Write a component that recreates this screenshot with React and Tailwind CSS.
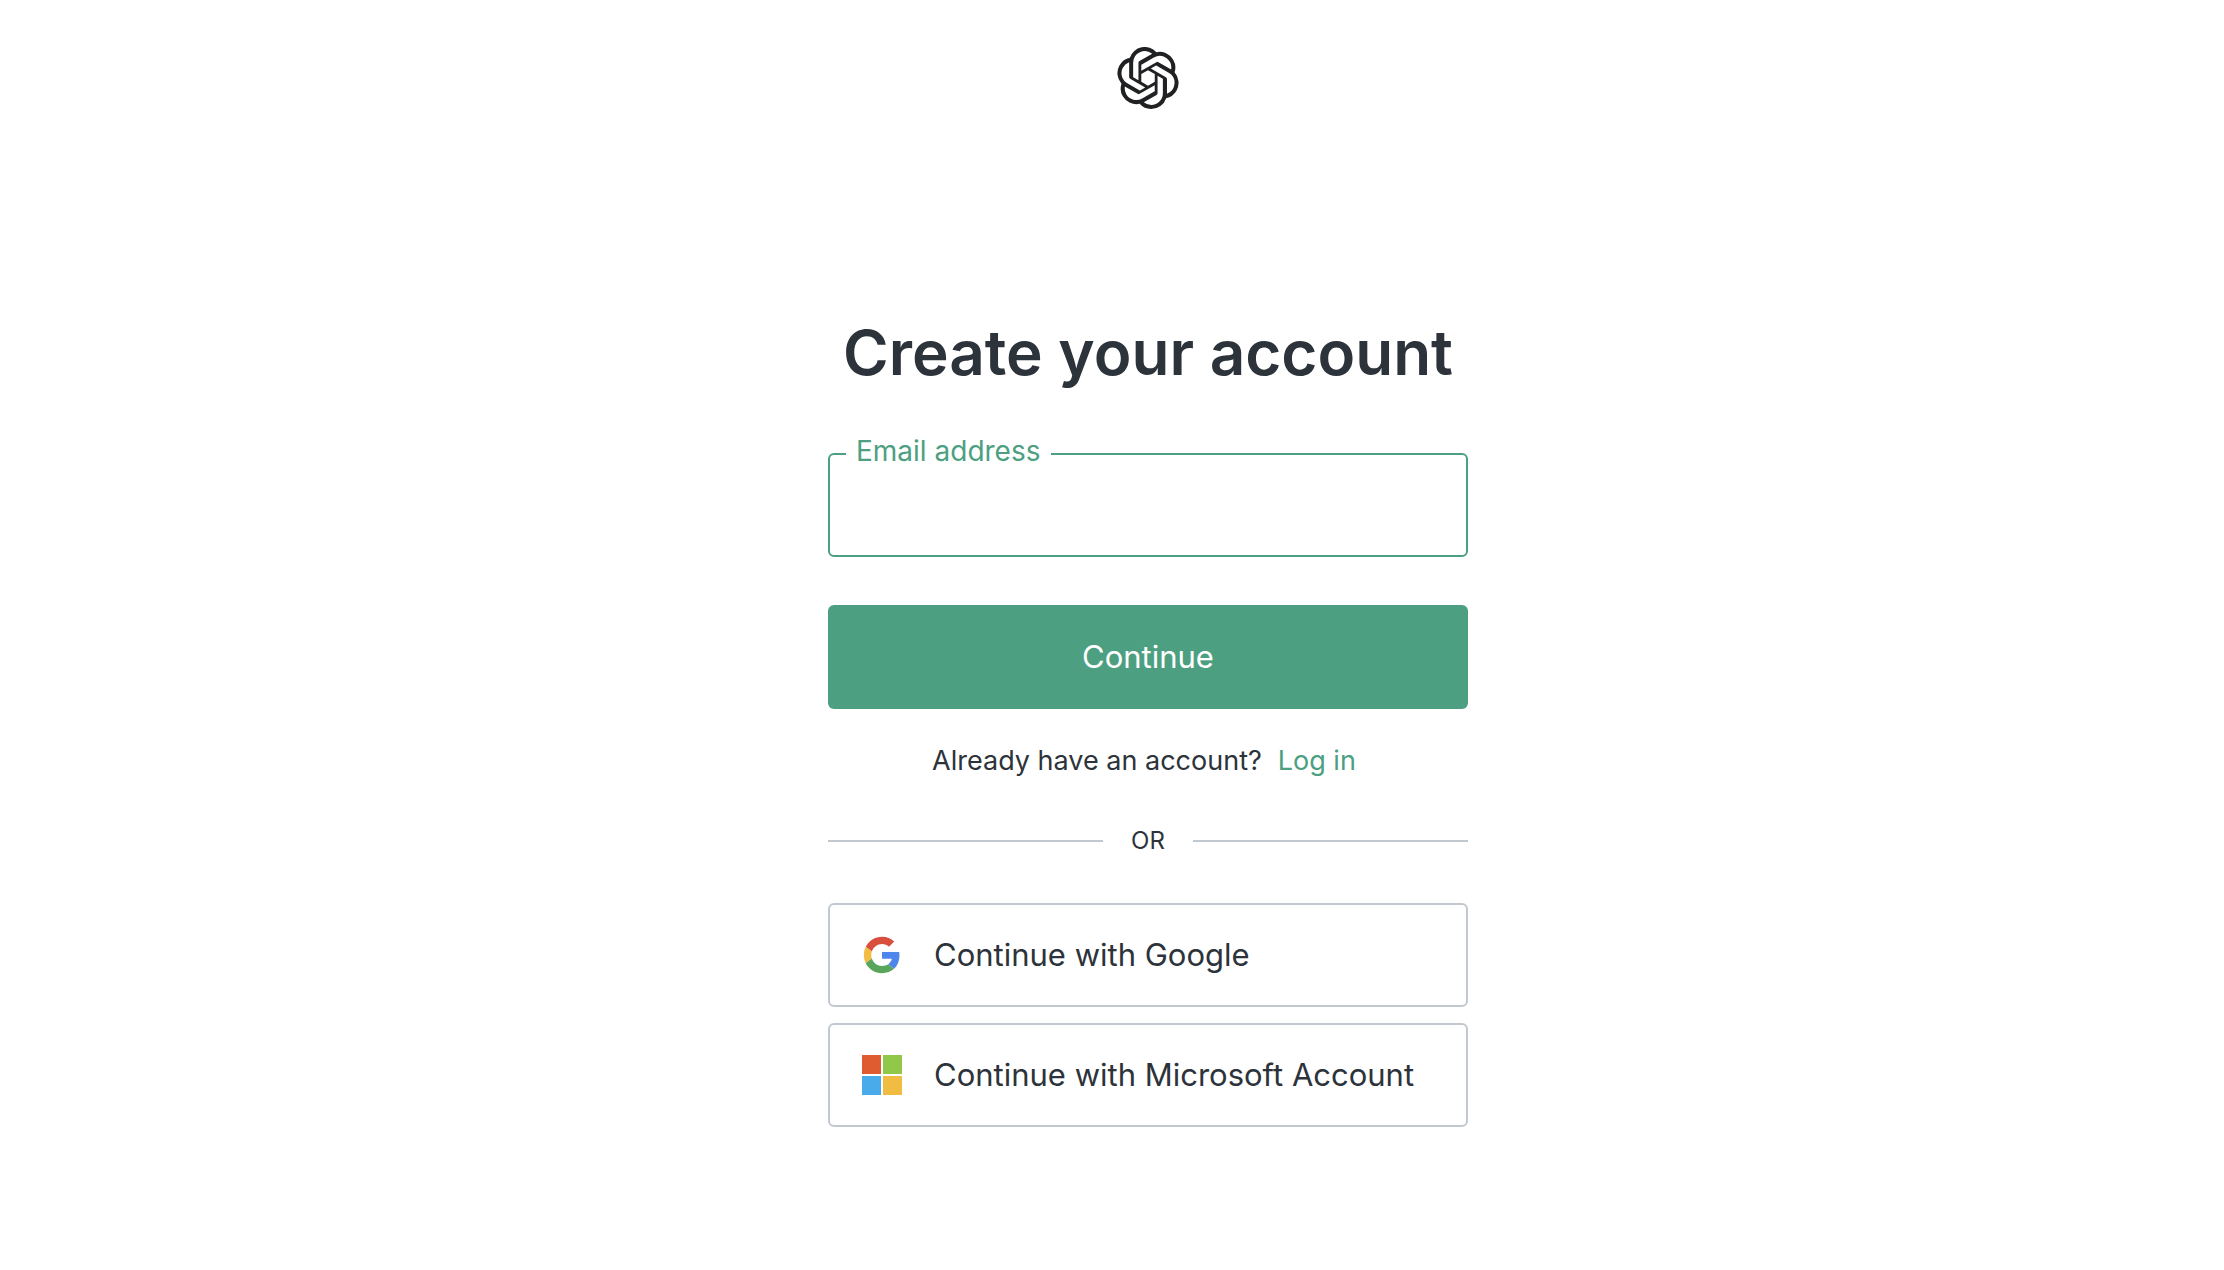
import { SiOpenai } from "react-icons/si";

function GoogleLogo() {
  return (
    <svg viewBox="0 0 48 48" className="size-10" aria-hidden="true">
      <g transform="translate(2.2 2.2) scale(.91)">
        <path fill="#d94f3d" d="M24 9.5c3.54 0 6.71 1.22 9.21 3.6l6.85-6.85C35.9 2.38 30.47 0 24 0 14.62 0 6.51 5.38 2.56 13.22l7.98 6.19C12.43 13.72 17.74 9.5 24 9.5z" />
        <path fill="#4f86ec" d="M46.98 24.55c0-1.57-.15-3.09-.38-4.55H24v9.02h12.94c-.58 2.96-2.26 5.48-4.78 7.18l7.73 6c4.51-4.18 7.09-10.36 7.09-17.65z" />
        <path fill="#f2bd42" d="M10.53 28.59c-.48-1.45-.76-2.99-.76-4.59s.27-3.14.76-4.59l-7.98-6.19C.92 16.46 0 20.12 0 24c0 3.88.92 7.54 2.56 10.78l7.97-6.19z" />
        <path fill="#58a55c" d="M24 48c6.48 0 11.93-2.13 15.89-5.81l-7.73-6c-2.15 1.45-4.92 2.3-8.16 2.3-6.26 0-11.57-4.22-13.47-9.91l-7.98 6.19C6.51 42.62 14.62 48 24 48z" />
      </g>
    </svg>
  );
}

function MicrosoftLogo() {
  return (
    <svg viewBox="0 0 40 40" className="size-10" aria-hidden="true">
      <path fill="#df5b30" d="M0 0h19v19H0z" />
      <path fill="#92c84a" d="M21 0h19v19H21z" />
      <path fill="#4aabea" d="M0 21h19v19H0z" />
      <path fill="#f1bc42" d="M21 21h19v19H21z" />
    </svg>
  );
}

function ProviderButton({ logo, children }) {
  return (
    <button
      type="button"
      className="flex h-26 w-full items-center gap-8 rounded-md border-2 border-[#c2c8d0] px-8 text-left text-[31px] leading-10 whitespace-nowrap"
    >
      {logo}
      <span>{children}</span>
    </button>
  );
}

export default function App() {
  return (
    <div className="flex min-h-screen flex-col items-center bg-white pt-[47px] pl-18 font-['Inter',sans-serif] text-[#2d333a]">
      <header>
        <SiOpenai className="size-[62px] text-[#202123]" aria-label="OpenAI" />
      </header>
      <main className="mt-[204px] w-full max-w-160">
        <h1 className="text-center text-[62px] leading-20 font-semibold whitespace-nowrap">Create your account</h1>
        <form onSubmit={(e) => e.preventDefault()}>
          <div className="relative mt-15">
            <label htmlFor="email" className="absolute -top-[18px] left-[18px] bg-white px-2.5 text-[28px] leading-8 text-[#4ca081]">
              Email address
            </label>
            <input
              id="email"
              type="email"
              className="block h-26 w-full rounded-md border-2 border-[#4ca081] px-7 text-[31px] outline-none"
            />
          </div>
          <button type="submit" className="mt-12 h-26 w-full rounded-md bg-[#4ca081] text-[31px] leading-10 text-white">
            Continue
          </button>
        </form>
        <p className="mt-8 flex justify-center gap-4 pr-2 text-[27px] leading-10">
          Already have an account?
          <a href="#login" className="text-[#4ca081]">Log in</a>
        </p>
        <div className="mt-11 flex items-center text-2xl leading-8">
          <span className="h-0.5 flex-1 bg-[#c2c8d0]" />
          <span className="w-[90px] text-center">OR</span>
          <span className="h-0.5 flex-1 bg-[#c2c8d0]" />
        </div>
        <div className="mt-[46px] flex flex-col gap-4">
          <ProviderButton logo={<GoogleLogo />}>Continue with Google</ProviderButton>
          <ProviderButton logo={<MicrosoftLogo />}>Continue with Microsoft Account</ProviderButton>
        </div>
      </main>
    </div>
  );
}
